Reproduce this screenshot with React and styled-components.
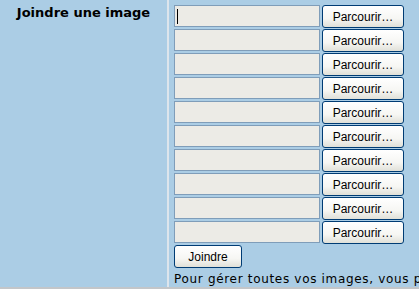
import React from "react";
import styled, { createGlobalStyle } from "styled-components";

const Global = createGlobalStyle`
  html, body { margin: 0; padding: 0; background: #abcde5; overflow: hidden; }
  #root { width: 419px; height: 289px; }
`;

const Page = styled.div`
  display: grid;
  grid-template-columns: 167px 2px 1fr;
  height: 287px;
  border-bottom: 2px solid #c3c6c9;
  background: #abcde5;
  overflow: hidden;
`;

const LabelCell = styled.div`
  padding-top: 5px;
  text-align: center;
  font-family: "DejaVu Sans", Verdana, sans-serif;
  font-weight: bold;
  font-size: 13px;
  line-height: 16px;
  color: #000;
`;

const Divider = styled.div`
  background: #dde5ec;
`;

const FieldCell = styled.div`
  padding: 5px 0 0 5px;
  display: flex;
  flex-direction: column;
  gap: 2px;
  min-width: 0;
  overflow: hidden;
`;

const Row = styled.div`
  display: flex;
  align-items: flex-start;
  gap: 2px;
  height: 22px;
`;

const Field = styled.div`
  position: relative;
  box-sizing: border-box;
  width: 146px;
  height: 22px;
  background: #ecebe6;
  border: 1px solid #7f9db9;
`;

const Caret = styled.span`
  position: absolute;
  left: 2px;
  top: 3px;
  width: 1px;
  height: 15px;
  background: #000;
`;

const Button = styled.button`
  box-sizing: border-box;
  width: ${(p) => p.$w}px;
  height: 23px;
  padding: 0;
  margin: 0;
  border: 1px solid #003c74;
  border-radius: 3px;
  background: linear-gradient(#ffffff 0%, #f6f6f3 60%, #e0e0d8 100%);
  font-family: "Liberation Sans", Arial, sans-serif;
  font-size: 12px;
  color: #000;
  line-height: 20px;
`;

const Footer = styled.div`
  margin-top: 1px;
  font-family: "DejaVu Sans", Verdana, sans-serif;
  font-size: 12px;
  letter-spacing: 0.68px;
  line-height: 18px;
  white-space: nowrap;
  color: #000;
`;

export default function App() {
  const rows = Array.from({ length: 10 }, (_, i) => i);
  return (
    <>
      <Global />
      <Page>
        <LabelCell>Joindre une image</LabelCell>
        <Divider />
        <FieldCell>
          {rows.map((i) => (
            <Row key={i}>
              <Field>{i === 0 && <Caret />}</Field>
              <Button $w={82}>Parcourir…</Button>
            </Row>
          ))}
          <Row>
            <Button $w={68}>Joindre</Button>
          </Row>
          <Footer>Pour gérer toutes vos images, vous pouvez utiliser la galerie.</Footer>
        </FieldCell>
      </Page>
    </>
  );
}
